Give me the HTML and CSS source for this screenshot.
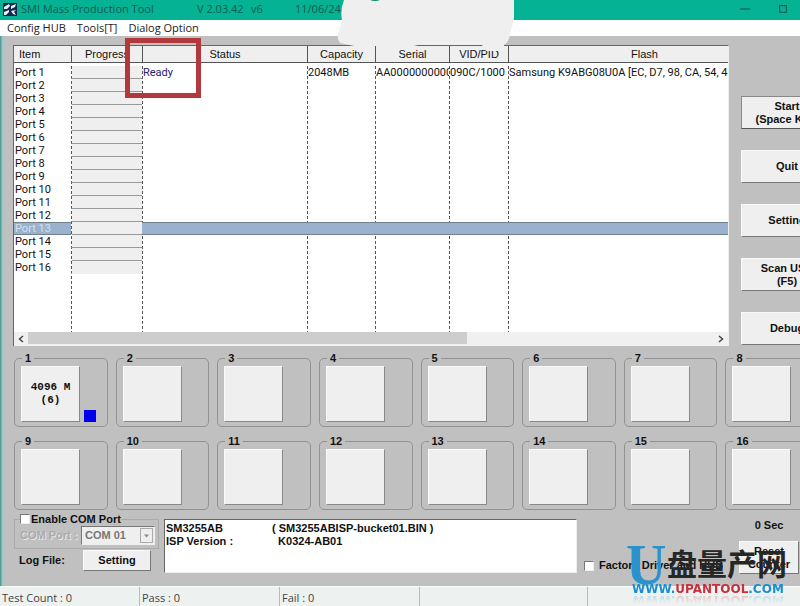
FILE: index.html
```html
<!DOCTYPE html>
<html lang="en">
<head>
<meta charset="utf-8">
<title>SMI Mass Production Tool</title>
<link rel="stylesheet" href="styles.css">
</head>
<body>
<header class="titlebar">
  <svg class="app-icon" viewBox="0 0 14 13" aria-hidden="true">
    <rect width="14" height="13" fill="#17264f"/>
    <path d="M1 4 L6 1 L7 3 L4 6 L1 6 Z M8 3 L13 1 L12 4 L8 6 Z M1 9 L6 7 L6 9 L3 12 L1 12 Z M8 8 L13 7 L11 9 L13 12 L10 11 Z" fill="#e6f3fa"/>
  </svg>
  <span class="app-name">SMI Mass Production Tool</span>
  <span class="app-version">V 2.03.42</span>
  <span class="app-rev">v6</span>
  <span class="app-date">11/06/24</span>
  <span class="window-controls">
    <button class="window-button" aria-label="Minimize"><svg viewBox="0 0 9 9"><path d="M0 4.500H9" stroke="#0a5a4c"/></svg></button>
    <button class="window-button" aria-label="Maximize"><svg viewBox="0 0 9 9"><rect x="1.500" y="1.500" width="6" height="6" fill="none" stroke="#0a5a4c"/></svg></button>
  </span>
</header>
<nav class="menubar">
  <a href="#">Config HUB</a>
  <a href="#">Tools[T]</a>
  <a href="#">Dialog Option</a>
</nav>

<main class="client">
  <div class="upper">
    <section class="port-list">
      <div class="port-view">
        <table class="ports">
          <colgroup>
            <col class="c-item"><col class="c-progress ruled"><col class="c-status ruled"><col class="c-capacity ruled"><col class="c-serial ruled"><col class="c-vid ruled"><col class="c-flash ruled">
          </colgroup>
          <thead>
            <tr><th class="first">Item</th><th>Progress</th><th>Status</th><th>Capacity</th><th>Serial</th><th>VID/PID</th><th>Flash</th></tr>
          </thead>
          <tbody>
            <tr><td>Port 1</td><td class="progress"></td><td class="ready">Ready</td><td>2048MB</td><td>AA0000000000</td><td>090C/1000</td><td>Samsung K9ABG08U0A [EC, D7, 98, CA, 54, 42]</td></tr>
            <tr><td>Port 2</td><td class="progress"></td><td></td><td></td><td></td><td></td><td></td></tr>
            <tr><td>Port 3</td><td class="progress"></td><td></td><td></td><td></td><td></td><td></td></tr>
            <tr><td>Port 4</td><td class="progress"></td><td></td><td></td><td></td><td></td><td></td></tr>
            <tr><td>Port 5</td><td class="progress"></td><td></td><td></td><td></td><td></td><td></td></tr>
            <tr><td>Port 6</td><td class="progress"></td><td></td><td></td><td></td><td></td><td></td></tr>
            <tr><td>Port 7</td><td class="progress"></td><td></td><td></td><td></td><td></td><td></td></tr>
            <tr><td>Port 8</td><td class="progress"></td><td></td><td></td><td></td><td></td><td></td></tr>
            <tr><td>Port 9</td><td class="progress"></td><td></td><td></td><td></td><td></td><td></td></tr>
            <tr><td>Port 10</td><td class="progress"></td><td></td><td></td><td></td><td></td><td></td></tr>
            <tr><td>Port 11</td><td class="progress"></td><td></td><td></td><td></td><td></td><td></td></tr>
            <tr><td>Port 12</td><td class="progress"></td><td></td><td></td><td></td><td></td><td></td></tr>
            <tr class="selected"><td>Port 13</td><td class="progress"></td><td></td><td></td><td></td><td></td><td></td></tr>
            <tr><td>Port 14</td><td class="progress"></td><td></td><td></td><td></td><td></td><td></td></tr>
            <tr><td>Port 15</td><td class="progress"></td><td></td><td></td><td></td><td></td><td></td></tr>
            <tr><td>Port 16</td><td class="progress last"></td><td></td><td></td><td></td><td></td><td></td></tr>
            <tr class="filler"><td></td><td></td><td></td><td></td><td></td><td></td><td></td></tr>
          </tbody>
        </table>
      </div>
      <div class="scrollbar">
        <button class="scroll-arrow" aria-label="Scroll left"><svg viewBox="0 0 6 8"><path d="M5 1 L1.500 4 L5 7" fill="none" stroke="#444" stroke-width="1.500"/></svg></button>
        <div class="scroll-track"><div class="scroll-thumb"></div></div>
        <button class="scroll-arrow" aria-label="Scroll right"><svg viewBox="0 0 6 8"><path d="M1 1 L4.500 4 L1 7" fill="none" stroke="#444" stroke-width="1.500"/></svg></button>
      </div>
      <div class="highlight"></div>
    </section>
    <aside class="actions">
      <button class="push default">Start<br>(Space Key)</button>
      <button class="push">Quit</button>
      <button class="push">Setting</button>
      <button class="push">Scan USB<br>(F5)</button>
      <button class="push">Debug</button>
    </aside>
  </div>

  <section class="slots">
    <fieldset class="slot"><legend>1</legend><button class="tile">4096 M<br>(6)</button><span class="lamp"></span></fieldset>
    <fieldset class="slot"><legend>2</legend><button class="tile" aria-label="Port 2"></button></fieldset>
    <fieldset class="slot"><legend>3</legend><button class="tile" aria-label="Port 3"></button></fieldset>
    <fieldset class="slot"><legend>4</legend><button class="tile" aria-label="Port 4"></button></fieldset>
    <fieldset class="slot"><legend>5</legend><button class="tile" aria-label="Port 5"></button></fieldset>
    <fieldset class="slot"><legend>6</legend><button class="tile" aria-label="Port 6"></button></fieldset>
    <fieldset class="slot"><legend>7</legend><button class="tile" aria-label="Port 7"></button></fieldset>
    <fieldset class="slot"><legend>8</legend><button class="tile" aria-label="Port 8"></button></fieldset>
    <fieldset class="slot"><legend>9</legend><button class="tile" aria-label="Port 9"></button></fieldset>
    <fieldset class="slot"><legend>10</legend><button class="tile" aria-label="Port 10"></button></fieldset>
    <fieldset class="slot"><legend>11</legend><button class="tile" aria-label="Port 11"></button></fieldset>
    <fieldset class="slot"><legend>12</legend><button class="tile" aria-label="Port 12"></button></fieldset>
    <fieldset class="slot"><legend>13</legend><button class="tile" aria-label="Port 13"></button></fieldset>
    <fieldset class="slot"><legend>14</legend><button class="tile" aria-label="Port 14"></button></fieldset>
    <fieldset class="slot"><legend>15</legend><button class="tile" aria-label="Port 15"></button></fieldset>
    <fieldset class="slot"><legend>16</legend><button class="tile" aria-label="Port 16"></button></fieldset>
  </section>

  <section class="lower">
    <div class="com">
      <fieldset class="com-box">
        <legend><input type="checkbox" id="enable-com"><label for="enable-com">Enable COM Port</label></legend>
        <label class="com-label" for="com-port">COM Port :</label>
        <span class="com-select">
          <select id="com-port" disabled><option>COM 01</option></select>
          <svg viewBox="0 0 13 15" aria-hidden="true"><rect x=".5" y=".5" width="12" height="14" fill="#eee" stroke="#aaa"/><path d="M4 6.500h5l-2.500 3z" fill="#888"/></svg>
        </span>
      </fieldset>
      <div class="log-row"><span>Log File:</span><button class="push small">Setting</button></div>
    </div>
    <textarea class="info" readonly aria-label="Firmware information">SM3255AB&#9;( SM3255ABISP-bucket01.BIN )
ISP Version :&#9;  K0324-AB01</textarea>
    <div class="factory"><input type="checkbox" id="factory"><label for="factory">Factory Driver and HUB</label></div>
    <div class="timer"><span>0 Sec</span><button class="push reset">Reset<br>Counter</button></div>
    <div class="watermark">
      <div class="mark-top"><span class="mark-u">U</span><span class="mark-cjk" lang="zh">盘量产网</span></div>
      <div class="mark-url">WWW.<span>UPANTOOL</span>.COM</div>
    </div>
  </section>
</main>

<footer class="statusbar">
  <span>Test Count : 0</span><span>Pass : 0</span><span>Fail : 0</span><span class="wide"></span><span class="rest"></span>
</footer>

<svg class="smudge" viewBox="0 0 180 52" aria-hidden="true">
  <path d="M8 0 H178 V18 Q176 28 174 34 Q173 42 168 45 L168 51 L150 51 L146 45 H82 L78 46 H18 L4 43 Q0 38 3 32 L6 20 Q4 10 8 0 Z" fill="#efefef"/>
  <ellipse cx="39" cy="-1" rx="5" ry="2" fill="#148570"/>
</svg>
</body>
</html>
```
FILE: styles.css
```css
* { box-sizing: border-box; }

body {
  margin: 0;
  min-height: 100vh;
  display: flex;
  flex-direction: column;
  position: relative;
  overflow: hidden;
  background: #c0c0c0;
  color: #111;
  font: 11px/13px "Liberation Sans", Arial, sans-serif;
}

button, input, select, textarea { font: inherit; color: inherit; margin: 0; }

/* Title and menu */
.titlebar {
  display: flex;
  align-items: center;
  height: 20px;
  padding: 0 12px 2px 3px;
  background: #06b294;
  color: #0b5c4e;
  font: 11px/16px "Open Sans", sans-serif;
  white-space: nowrap;
}
.app-icon { width: 14px; height: 13px; margin-right: 4px; }
.app-name { width: 176px; }
.app-version { width: 54px; }
.app-rev { width: 44px; }
.window-controls { display: flex; gap: 28px; margin-left: auto; }
.window-button { display: flex; width: 10px; padding: 0; border: 0; background: none; }
.window-button svg { width: 10px; height: 10px; }

.menubar {
  display: flex;
  gap: 11px;
  height: 16px;
  padding-left: 7px;
  background: #fff;
  font: 11px/16px "Open Sans", sans-serif;
}
.menubar a { color: #222; text-decoration: none; white-space: nowrap; }

.client {
  flex: 1;
  padding: 9px 0 12px 14px;
  background: linear-gradient(90deg, #4f9d96 0 1px, #a9c4c1 2px, #c0c0c0 7px);
}

/* Port list */
.upper { display: flex; gap: 12px; margin-right: -33px; }
.port-list {
  position: relative;
  flex: 1;
  min-width: 0;
  margin-left: -1px;
  border: solid #666;
  border-width: 1px 0 0 1px;
  border-right: 1px solid #eee;
  background: #fff;
}
.port-view { overflow: hidden; height: 286px; }
.ports { table-layout: fixed; width: 766px; border-collapse: separate; border-spacing: 0; }
.c-item { width: 57px; }
.c-progress { width: 71px; }
.c-status { width: 165px; }
.c-capacity { width: 68px; }
.c-serial { width: 74px; }
.c-vid { width: 59px; }
.c-flash { width: 272px; }
.ruled { background: repeating-linear-gradient(#555 0 3px, transparent 3px 5px) 0 0 / 1px 100% no-repeat; }
.ports th {
  height: 17px;
  padding: 0;
  border-bottom: 1px solid #555;
  border-left: 1px solid #555;
  background: #efefef;
  font-weight: normal;
  overflow: hidden;
}
.ports th.first { border-left: 0; padding-left: 5px; text-align: left; }
.ports td {
  height: 13px;
  padding: 0 0 0 1px;
  font-family: Roboto, sans-serif;
  line-height: 13px;
  white-space: nowrap;
  overflow: hidden;
}
.ports tbody::before { content: ""; display: table-row; height: 3px; }
.ports .progress {
  border-left: 1px solid transparent;
  border-bottom: 1px solid #999;
  background: #efefef;
  background-clip: padding-box;
}
.ports .last { border-bottom-color: #efefef; }
.ports .ready { color: #24206e; }
.selected td:not(.progress) {
  background: #9ab2cd;
  border: solid #71808d;
  border-width: 1px 0;
  line-height: 11px;
  color: #d5e0ea;
}
.ports .filler td { height: 59px; }

.scrollbar { display: flex; height: 14px; background: #f0f0f0; }
.scroll-arrow { display: grid; place-items: center; width: 14px; padding: 0; border: 0; background: none; }
.scroll-arrow svg { width: 6px; height: 8px; }
.scroll-track { flex: 1; }
.scroll-thumb { width: 64%; height: 12px; background: #cdcdcd; }

.highlight {
  position: absolute;
  left: 111px;
  top: -8px;
  width: 76px;
  height: 60px;
  border: 5px solid #b3383b;
}

/* Buttons */
.push {
  padding: 0;
  border: 1px solid;
  border-color: #fafafa #777 #777 #fafafa;
  background: #efefef;
  font-weight: bold;
  line-height: 13px;
}
.push.default { border-color: #888 #555 #555 #888; }
.actions { display: flex; flex-direction: column; gap: 21px; width: 92px; padding-top: 51px; }
.actions .push { height: 33px; }

/* Port slots */
.slots {
  display: grid;
  grid-template-columns: repeat(8, 1fr);
  gap: 8px;
  margin: 6px -19px 0 0;
}
.slot {
  display: flex;
  align-items: flex-end;
  gap: 4px;
  min-width: 0;
  height: 75px;
  margin: 0;
  padding: 2px 0 4px 6px;
  border: 1px solid #929292;
  border-radius: 5px;
}
.slot legend { margin-left: 1px; padding: 0 3px; line-height: 12px; font-weight: bold; }
.tile {
  width: 59px;
  height: 56px;
  padding: 0;
  border: 1px solid;
  border-color: #fafafa #888 #888 #fafafa;
  background: #efefef;
  font: bold 11px/13px "Liberation Mono", monospace;
}
.lamp { width: 12px; height: 12px; background: #0000ee; }

/* Lower controls */
.lower {
  position: relative;
  display: flex;
  align-items: flex-start;
  padding-top: 3px;
  font-weight: bold;
}
input[type="checkbox"] {
  appearance: none;
  width: 10px;
  height: 10px;
  border: 1px solid;
  border-color: #777 #eee #eee #777;
  background: #fff;
}
.com { width: 145px; }
.com-box {
  display: flex;
  align-items: center;
  height: 36px;
  margin: 0;
  padding: 0 3px 2px 5px;
  border: 1px solid #aaa;
  white-space: nowrap;
}
.com-box legend { display: flex; align-items: center; gap: 1px; padding: 0; line-height: 12px; }
.com-label { flex: 1; color: #aaa; text-shadow: 1px 1px #e6e6e6; }
.com-select { position: relative; width: 74px; height: 19px; }
.com-select select {
  appearance: none;
  width: 100%;
  height: 100%;
  padding: 0 3px;
  border: 1px solid;
  border-color: #777 #eee #eee #777;
  border-radius: 0;
  background: #efefef;
  color: #777;
  opacity: 1;
}
.com-select svg { position: absolute; right: 2px; top: 2px; width: 13px; height: 15px; }
.log-row { display: flex; align-items: center; justify-content: space-between; padding: 1px 8px 0 5px; }
.small { width: 68px; height: 21px; }

.info {
  flex: 1;
  min-width: 0;
  height: 54px;
  margin: 6px 0 0 5px;
  padding: 2px 1px;
  border: 1px solid;
  border-color: #666 #eee #eee #666;
  outline: 0;
  resize: none;
  overflow: hidden;
  background: #fff;
  font-weight: bold;
  tab-size: 106px;
}
.factory { display: flex; align-items: center; gap: 5px; width: 155px; padding: 46px 0 0 7px; white-space: nowrap; }
.timer { display: flex; flex-direction: column; align-items: center; gap: 9px; width: 68px; padding: 6px 0 0 6px; }
.timer .reset { width: 60px; height: 33px; }

/* Site mark laid over the lower right corner */
.watermark { position: absolute; right: 6px; top: 32px; width: 168px; color: #198fcf; white-space: nowrap; }
.mark-top { display: flex; align-items: flex-start; height: 41px; }
.mark-u { width: 41px; color: #2a93cc; font: bold 56px/46px "Liberation Serif", serif; }
.mark-cjk { color: #262626; font: bold 30px/40px "Noto Sans CJK SC", sans-serif; }
.mark-url {
  margin-left: 6px;
  font: bold 12px/13px "DejaVu Sans", sans-serif;
  -webkit-box-reflect: below -3px linear-gradient(transparent 20%, rgba(0, 0, 0, .3));
}
.mark-url span { color: #c8303c; }

/* Status bar */
.statusbar {
  display: flex;
  height: 21px;
  border-top: 1px solid #fafafa;
  background: #edf1f0;
  color: #444;
  font: 11px/22px "Open Sans", sans-serif;
}
.statusbar span { width: 140px; padding-left: 2px; border-right: 1px solid #bbb; white-space: nowrap; }
.statusbar .wide { width: 168px; }
.statusbar .rest { flex: 1; border: 0; }

.smudge { position: absolute; left: 336px; top: 0; width: 180px; height: 52px; }
```
